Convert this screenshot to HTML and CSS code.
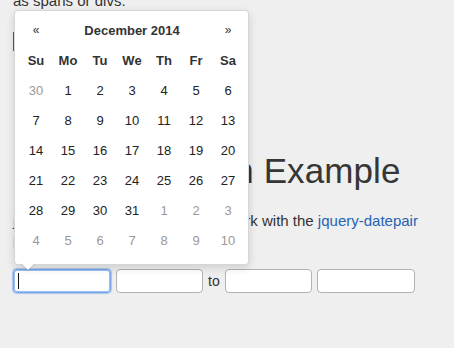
FILE: index.html
```html
<!DOCTYPE html>
<html>
<head>
<meta charset="utf-8">
<link rel="stylesheet" href="styles.css">
</head>
<body>
<div class="page">
  <p class="intro">as spans or divs.</p>
  <pre class="code">$('#ex .date').datepicker();</pre>
  <h1 class="title">Datepair Plugin Example</h1>
  <p class="desc">jquery.timepicker is designed to work with the <a href="#">jquery-datepair</a> plugin.</p>
  <div class="inputs">
    <span class="field-wrap"><input class="field field-date is-focus" type="text"><span class="caret"></span></span>
    <input class="field field-time" type="text">
    <span class="to">to</span>
    <input class="field field-time" type="text">
    <input class="field field-date" type="text">
  </div>

  <div class="datepicker">
    <table class="cal">
      <thead>
        <tr class="cal-head">
          <th class="nav">&laquo;</th>
          <th class="month" colspan="5">December 2014</th>
          <th class="nav">&raquo;</th>
        </tr>
        <tr class="dow">
          <th>Su</th><th>Mo</th><th>Tu</th><th>We</th><th>Th</th><th>Fr</th><th>Sa</th>
        </tr>
      </thead>
      <tbody>
        <tr><td class="old">30</td><td>1</td><td>2</td><td>3</td><td>4</td><td>5</td><td>6</td></tr>
        <tr><td>7</td><td>8</td><td>9</td><td>10</td><td>11</td><td>12</td><td>13</td></tr>
        <tr><td>14</td><td>15</td><td>16</td><td>17</td><td>18</td><td>19</td><td>20</td></tr>
        <tr><td>21</td><td>22</td><td>23</td><td>24</td><td>25</td><td>26</td><td>27</td></tr>
        <tr><td>28</td><td>29</td><td>30</td><td>31</td><td class="old">1</td><td class="old">2</td><td class="old">3</td></tr>
        <tr><td class="old">4</td><td class="old">5</td><td class="old">6</td><td class="old">7</td><td class="old">8</td><td class="old">9</td><td class="old">10</td></tr>
      </tbody>
    </table>
  </div>
</div>
</body>
</html>
```

FILE: styles.css
```css
html, body {
  margin: 0;
  padding: 0;
  background: #efefef;
  height: 100%;
  overflow: hidden;
}

.page {
  position: relative;
  display: flow-root;
  padding: 0 13px;
  font-family: "Liberation Sans", Arial, sans-serif;
  font-size: 15px;
  color: #333;
}

.intro {
  margin: -9px 0 0;
  line-height: 20px;
}

.code {
  margin: 21px 0 0;
  width: 190px;
  height: 19px;
  border-left: 2px solid #c8283c;
  padding: 0 8px;
  font-size: 12px;
  line-height: 19px;
  overflow: hidden;
}

.title {
  margin: 100px 0 0;
  font-size: 35px;
  line-height: 40px;
  font-weight: normal;
  color: #363636;
  white-space: nowrap;
  letter-spacing: 0.1px;
}

.desc {
  margin: 20px 0 0;
  max-width: 425px;
  line-height: 20px;
}

.desc a {
  color: #2563b5;
  text-decoration: none;
}

.inputs {
  margin-top: 18px;
  display: flex;
  align-items: center;
  gap: 5px;
}

.field-wrap {
  position: relative;
  display: block;
  height: 24px;
}

.field {
  display: block;
  box-sizing: border-box;
  height: 24px;
  margin: 0;
  border: 1px solid #b3b3b3;
  border-radius: 4px;
  background: #fff;
  outline: none;
  padding: 0 4px;
}

.field-date { width: 98px; }
.field-time { width: 87px; }

.is-focus {
  border-color: #79a6e6;
  box-shadow: inset 0 0 0 1px #9cc0f0, 0 0 1px 1px rgba(110, 160, 235, 0.55);
}

.caret {
  position: absolute;
  left: 5px;
  top: 4px;
  width: 1px;
  height: 16px;
  background: #111;
}

.to {
  font-size: 14px;
  line-height: 24px;
  color: #333;
}

.datepicker {
  position: absolute;
  left: 14px;
  top: 10px;
  box-sizing: border-box;
  width: 235px;
  height: 255px;
  padding: 4px 4px 4px 5px;
  background: #fff;
  border: 1px solid rgba(0, 0, 0, 0.16);
  border-radius: 4px;
  box-shadow: 0 3px 8px rgba(0, 0, 0, 0.14);
}

.datepicker::before {
  content: "";
  position: absolute;
  left: 6px;
  bottom: -7px;
  border-left: 7px solid transparent;
  border-right: 7px solid transparent;
  border-top: 7px solid rgba(0, 0, 0, 0.16);
}

.datepicker::after {
  content: "";
  position: absolute;
  left: 7px;
  bottom: -6px;
  border-left: 6px solid transparent;
  border-right: 6px solid transparent;
  border-top: 6px solid #fff;
}

.cal {
  border-collapse: collapse;
  border-spacing: 0;
  font-size: 13px;
  color: #222;
}

.cal th,
.cal td {
  width: 32px;
  height: 30px;
  padding: 0;
  text-align: center;
  vertical-align: middle;
}

.cal-head th {
  font-weight: bold;
}

.cal-head .nav {
  font-size: 12px;
  font-weight: normal;
  color: #333;
}

.cal-head .month {
  width: auto;
  font-size: 13px;
  color: #333;
}

.dow th {
  font-weight: bold;
  color: #333;
}

.cal td.old {
  color: #999;
}
```
